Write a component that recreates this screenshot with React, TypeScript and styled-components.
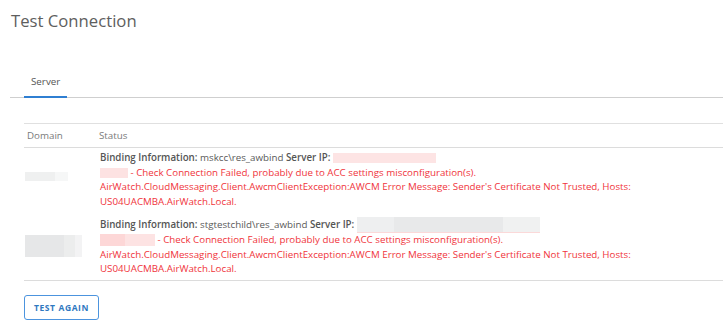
import { createGlobalStyle } from "styled-components";
import styled from "styled-components";

const GlobalStyle = createGlobalStyle`
  body {
    margin: 0;
    background: #fff;
    font-family: "Open Sans", "Liberation Sans", sans-serif;
    color: #555;
  }
`;

const Page = styled.div`
  padding: 0 0 0 10px;
`;

const Title = styled.h1`
  margin: 9px 0 0 1px;
  font-size: 16.7px;
  font-weight: 400;
  color: #5e5e5e;
  line-height: normal;
`;

const TabBar = styled.div`
  display: flex;
  margin-top: 35px;
  border-bottom: 1px solid #cfcfcf;
  padding-left: 14px;
`;

const Tab = styled.div<{ $active?: boolean }>`
  padding: 8px 7px 7px;
  line-height: 14px;
  font-size: 9.8px;
  color: #555;
  margin-bottom: -1px;
  border-bottom: 2px solid ${(p) => (p.$active ? "#2f7fd2" : "transparent")};
`;

const Section = styled.div`
  margin: 25px 0 0 14px;
`;

const Table = styled.div`
  display: grid;
  grid-template-columns: 75px 1fr;
  border-top: 1px solid #e0e0e0;
  border-bottom: 1px solid #dcdcdc;
`;

const HeadCell = styled.div<{ $indent?: number }>`
  padding: 5px 0 4px ${(p) => p.$indent ?? 0}px;
  line-height: 14px;
  font-size: 9.75px;
  color: #7a7a7a;
  border-bottom: 1px solid #dcdcdc;
`;

const DomainCell = styled.div`
  padding-left: 1px;
`;

const StatusCell = styled.div`
  padding: 3px 0 5px 1px;
  font-size: 9.75px;
  line-height: 14.5px;
  height: 58px;
`;

const Line = styled.div<{ $error?: boolean }>`
  white-space: nowrap;
  color: ${(p) => (p.$error ? "#f0343c" : "#5a5a5a")};
`;

const Label = styled.span`
  font-weight: 600;
  color: #555;
`;

const Redact = styled.span<{ $w: number; $h: number; $bg: string; $top?: number; $edge?: string }>`
  display: inline-block;
  vertical-align: middle;
  width: ${(p) => p.$w}px;
  height: ${(p) => p.$h}px;
  margin-top: ${(p) => p.$top ?? 0}px;
  background: ${(p) => p.$bg};
  border-bottom: ${(p) => (p.$edge ? `1px solid ${p.$edge}` : "none")};
`;

const Button = styled.button`
  margin-top: 14px;
  width: 75px;
  height: 25px;
  border: 1px solid #4c94de;
  border-radius: 3px;
  background: #fff;
  color: #2f78c0;
  font-family: "Open Sans", "Liberation Sans", sans-serif;
  font-size: 8.5px;
  font-weight: 700;
  letter-spacing: 0.6px;
  padding: 0;
`;

const rows = [
  {
    domain: { w: 43, h: 9, bg: "linear-gradient(90deg,#eff0f0 70%,#f6f7f7 70%)", top: 24 },
    domainName: "mskcc",
    ip: { w: 103, h: 10, bg: "#fde4e4" },
    host: { w: 28, h: 10, bg: "#fde2e2" },
  },
  {
    domain: { w: 57, h: 22, bg: "linear-gradient(90deg,#e6e7e8 68%,#eceded 68%,#eceded 88%,#f3f3f4 88%)", top: 21 },
    domainName: "stgtestchild",
    ip: { w: 183, h: 15, bg: "linear-gradient(90deg,#eeeff0 20%,#e8e9ea 20%,#e8e9ea 80%,#f0f1f1 80%)", edge: "#fbd9d9" },
    host: { w: 55, h: 12, bg: "linear-gradient(90deg,#fdd7d7 45%,#fde3e3 45%)" },
  },
];

export default function App() {
  return (
    <Page>
      <GlobalStyle />
      <Title>Test Connection</Title>
      <TabBar>
        <Tab $active>Server</Tab>
      </TabBar>
      <Section>
        <Table>
          <HeadCell $indent={3}>Domain</HeadCell>
          <HeadCell>Status</HeadCell>
          {rows.map((r) => (
            <>
              <DomainCell key={r.domainName + "-d"}>
                <Redact $w={r.domain.w} $h={r.domain.h} $bg={r.domain.bg} $top={r.domain.top} />
              </DomainCell>
              <StatusCell key={r.domainName + "-s"}>
                <Line>
                  <Label>Binding Information:</Label> {r.domainName}\res_awbind <Label>Server IP:</Label>{" "}
                  <Redact $w={r.ip.w} $h={r.ip.h} $bg={r.ip.bg} $edge={r.ip.edge} />
                </Line>
                <Line $error>
                  <Redact $w={r.host.w} $h={r.host.h} $bg={r.host.bg} /> - Check Connection Failed, probably due to ACC
                  settings misconfiguration(s).
                </Line>
                <Line $error>
                  AirWatch.CloudMessaging.Client.AwcmClientException:AWCM Error Message: Sender's Certificate Not
                  Trusted, Hosts:
                </Line>
                <Line $error>US04UACMBA.AirWatch.Local.</Line>
              </StatusCell>
            </>
          ))}
        </Table>
        <Button>TEST AGAIN</Button>
      </Section>
    </Page>
  );
}
